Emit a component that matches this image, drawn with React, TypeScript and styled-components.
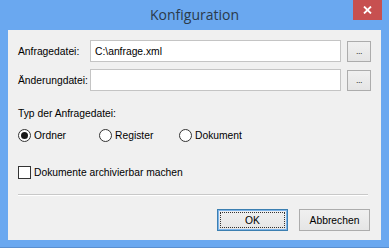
import React from 'react';
import styled, { createGlobalStyle } from 'styled-components';

const Global = createGlobalStyle`
  html, body {
    margin: 0;
    padding: 0;
    background: #6aa8f0;
  }
  * { box-sizing: border-box; }
`;

const Window = styled.div`
  width: 389px;
  height: 248px;
  background: #6aa8f0;
  display: flex;
  flex-direction: column;
  border-bottom: 1px solid #5a8fd0;
  font-family: "Liberation Sans", Arial, sans-serif;
  font-size: 10.3px;
  color: #000;
`;

const TitleBar = styled.div`
  height: 30px;
  position: relative;
  display: flex;
  align-items: center;
  justify-content: center;
`;

const Title = styled.div`
  font-family: "Open Sans", "Noto Sans", sans-serif;
  font-size: 14px;
  color: #2b3a4a;
  margin-top: -1px;
`;

const CloseButton = styled.div`
  position: absolute;
  top: 0;
  right: 7px;
  width: 29px;
  height: 20px;
  background: #c75050;
  display: flex;
  align-items: center;
  justify-content: center;
`;

const Client = styled.div`
  flex: 1;
  margin: 0 8px 7px 8px;
  background: #f0f0f0;
  padding: 10px 10px 0 10px;
  display: flex;
  flex-direction: column;
`;

const FileRow = styled.div<{ $gap?: number }>`
  display: flex;
  align-items: center;
  height: 22px;
  margin-bottom: ${p => p.$gap ?? 0}px;
`;

const Label = styled.div`
  width: 72px;
  white-space: nowrap;
`;

const TextField = styled.div`
  width: 251px;
  height: 22px;
  background: #fff;
  border: 1px solid #c4c4c4;
  display: flex;
  align-items: center;
  padding-left: 4px;
`;

const DotsButton = styled.div`
  width: 24px;
  height: 21px;
  margin-left: 6px;
  border: 1px solid #acacac;
  background: linear-gradient(#f0f0f0, #e5e5e5);
  display: flex;
  align-items: flex-end;
  justify-content: center;
  padding-bottom: 5px;
  font-size: 9px;
  letter-spacing: -0.5px;
  color: #333;
`;

const GroupLabel = styled.div`
  margin-top: 16px;
  height: 13px;
  line-height: 13px;
`;

const RadioRow = styled.div`
  display: flex;
  margin-top: 8px;
  height: 14px;
  align-items: center;
`;

const RadioItem = styled.div<{ $width: number }>`
  display: flex;
  align-items: center;
  width: ${p => p.$width}px;
`;

const RadioCircle = styled.div<{ $checked?: boolean }>`
  width: 13px;
  height: 13px;
  border-radius: 50%;
  border: 1px solid #333;
  background: #fff;
  margin-right: 3px;
  display: flex;
  align-items: center;
  justify-content: center;
  &::after {
    content: "";
    width: 7px;
    height: 7px;
    border-radius: 50%;
    background: ${p => (p.$checked ? '#1a1a1a' : 'transparent')};
  }
`;

const CheckRow = styled.div`
  display: flex;
  align-items: center;
  margin-top: 23px;
  height: 14px;
`;

const CheckBox = styled.div`
  width: 13px;
  height: 13px;
  border: 1px solid #333;
  background: #fff;
  margin-right: 3px;
`;

const Separator = styled.div`
  margin-top: 15px;
  height: 2px;
  border-top: 1px solid #c8c8c8;
  border-bottom: 1px solid #fff;
  margin-right: 3px;
`;

const ButtonRow = styled.div`
  display: flex;
  justify-content: flex-end;
  gap: 11px;
  margin-top: 13px;
  padding-right: 1px;
`;

const DialogButton = styled.div<{ $default?: boolean }>`
  width: 71px;
  height: 22px;
  border: 1px solid ${p => (p.$default ? '#3c7fb1' : '#acacac')};
  background: linear-gradient(#f0f0f0, #e5e5e5);
  display: flex;
  align-items: center;
  justify-content: center;
  position: relative;
  color: #000;
  ${p =>
    p.$default &&
    `
    box-shadow: inset 0 0 0 1px #7eb4ea;
    &::before {
      content: "";
      position: absolute;
      inset: 2px;
      border: 1px dotted #333;
    }
  `}
`;

export default function App() {
  return (
    <>
      <Global />
      <Window>
        <TitleBar>
          <Title>Konfiguration</Title>
          <CloseButton>
            <svg width="9" height="8" viewBox="0 0 9 8">
              <path d="M1 0.5 L8 7.5 M8 0.5 L1 7.5" stroke="#fff" strokeWidth="1.8" />
            </svg>
          </CloseButton>
        </TitleBar>
        <Client>
          <FileRow $gap={7}>
            <Label>Anfragedatei:</Label>
            <TextField>C:\anfrage.xml</TextField>
            <DotsButton>...</DotsButton>
          </FileRow>
          <FileRow>
            <Label>Änderungdatei:</Label>
            <TextField />
            <DotsButton>...</DotsButton>
          </FileRow>
          <GroupLabel>Typ der Anfragedatei:</GroupLabel>
          <RadioRow>
            <RadioItem $width={81}>
              <RadioCircle $checked />
              Ordner
            </RadioItem>
            <RadioItem $width={80}>
              <RadioCircle />
              Register
            </RadioItem>
            <RadioItem $width={80}>
              <RadioCircle />
              Dokument
            </RadioItem>
          </RadioRow>
          <CheckRow>
            <CheckBox />
            Dokumente archivierbar machen
          </CheckRow>
          <Separator />
          <ButtonRow>
            <DialogButton $default>OK</DialogButton>
            <DialogButton>Abbrechen</DialogButton>
          </ButtonRow>
        </Client>
      </Window>
    </>
  );
}
